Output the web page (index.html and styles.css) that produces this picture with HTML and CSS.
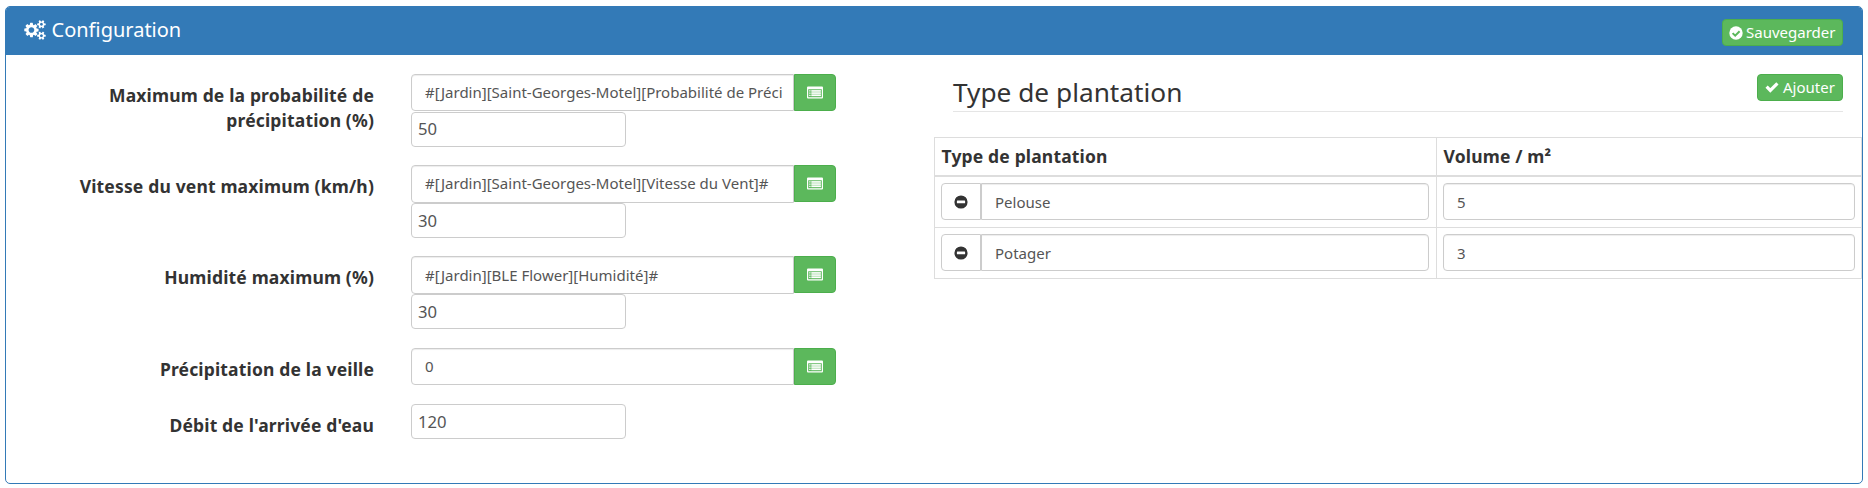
FILE: index.html
```html
<!DOCTYPE html>
<html lang="fr">
<head>
<meta charset="utf-8">
<title>Configuration</title>
<link rel="stylesheet" href="styles.css">
</head>
<body>
<svg class="defs" width="0" height="0" aria-hidden="true">
  <symbol id="cogs" viewBox="0 0 1920 1792"><path d="M896 896q0-106-75-181t-181-75-181 75-75 181 75 181 181 75 181-75 75-181zm768 512q0-52-38-90t-90-38-90 38-38 90q0 53 37.500 90.500t90.500 37.500 90.500-37.500 37.500-90.500zm0-1024q0-52-38-90t-90-38-90 38-38 90q0 53 37.500 90.500t90.500 37.500 90.500-37.500 37.500-90.500zm-384 421v185q0 10-7 19.500t-16 10.500l-155 24q-11 35-32 76 34 48 90 115 7 11 7 20 0 12-7 19-23 30-82.500 89.500t-78.500 59.500q-11 0-21-7l-115-90q-37 19-77 31-11 108-23 155-7 24-30 24h-186q-11 0-20-7.500t-10-17.500l-23-153q-34-10-75-31l-118 89q-7 7-20 7-11 0-21-8-144-133-144-160 0-9 7-19 10-14 41-53t47-61q-23-44-35-82l-152-24q-10-1-17-9.500t-7-19.500v-185q0-10 7-19.500t16-10.500l155-24q11-35 32-76-34-48-90-115-7-11-7-20 0-12 7-20 22-30 82-89t79-59q11 0 21 7l115 90q34-18 77-32 11-108 23-154 7-24 30-24h186q11 0 20 7.500t10 17.500l23 153q34 10 75 31l118-89q8-7 20-7 11 0 21 8 144 133 144 160 0 8-7 19-12 16-42 54t-45 60q23 48 34 82l152 23q10 2 17 10.500t7 19.500zm640 533v140q0 16-149 31-12 27-30 52 51 113 51 138 0 4-4 7-122 71-124 71-8 0-46-47t-52-68q-20 2-30 2t-30-2q-14 21-52 68t-46 47q-2 0-124-71-4-3-4-7 0-25 51-138-18-25-30-52-149-15-149-31v-140q0-16 149-31 13-29 30-52-51-113-51-138 0-4 4-7 4-2 35-20t59-34 30-16q8 0 46 46.500t52 67.500q20-2 30-2t30 2q51-71 92-112l6-2q4 0 124 70 4 3 4 7 0 25-51 138 17 23 30 52 149 15 149 31zm0-1024v140q0 16-149 31-12 27-30 52 51 113 51 138 0 4-4 7-122 71-124 71-8 0-46-47t-52-68q-20 2-30 2t-30-2q-14 21-52 68t-46 47q-2 0-124-71-4-3-4-7 0-25 51-138-18-25-30-52-149-15-149-31v-140q0-16 149-31 13-29 30-52-51-113-51-138 0-4 4-7 4-2 35-20t59-34 30-16q8 0 46 46.500t52 67.500q20-2 30-2t30 2q51-71 92-112l6-2q4 0 124 70 4 3 4 7 0 25-51 138 17 23 30 52 149 15 149 31z"/></symbol>
  <symbol id="check-circle" viewBox="0 0 14 14"><circle cx="7" cy="7" r="6.700"/><path class="cut" d="M3.600 7.100l2.600 2.600 4.400-4.400"/></symbol>
  <symbol id="check" viewBox="0 0 14 12"><path class="line" d="M1.600 5.700l3.700 3.700 7.100-7.100"/></symbol>
  <symbol id="list-alt" viewBox="0 0 16 13"><path fill-rule="evenodd" d="M1 .5h14a1 1 0 0 1 1 1v10a1 1 0 0 1-1 1H1a1 1 0 0 1-1-1v-10a1 1 0 0 1 1-1zM1.200 3.200v8.100h13.600V3.200z"/><path d="M2.200 4.200h1.400v1.200H2.200zM2.200 6.500h1.400v1.200H2.200zM2.200 8.800h1.400V10H2.200zM4.400 4.200h9.400v1.300H4.400zM4.400 6.500h9.400v1.300H4.400zM4.400 8.800h9.400v1.300H4.400z"/><path opacity=".55" d="M4.400 4h9.400v6.300H4.400z"/></symbol>
  <symbol id="minus-circle" viewBox="0 0 14 14"><path fill-rule="evenodd" d="M7 .4a6.600 6.600 0 1 0 0 13.200A6.600 6.600 0 0 0 7 .4zM3.400 5.600h7.200a.5.5 0 0 1 .5.5v1.600a.5.5 0 0 1-.5.5H3.400a.5.5 0 0 1-.5-.5V6.100a.5.5 0 0 1 .5-.5z"/></symbol>
</svg>
<section class="panel">
  <header class="panel-heading">
    <h3 class="panel-title"><svg class="icon-cogs"><use href="#cogs"/></svg>Configuration</h3>
    <button class="btn btn-save"><svg class="icon-save"><use href="#check-circle"/></svg>Sauvegarder</button>
  </header>
  <div class="panel-body">
    <form class="settings">
      <div class="form-row">
        <label class="label">Maximum de la probabilité de précipitation (%)</label>
        <div class="fields">
          <div class="group"><input class="control" value="#[Jardin][Saint-Georges-Motel][Probabilité de Précipitation]#"><button type="button" class="pick"><svg class="icon-list"><use href="#list-alt"/></svg></button></div>
          <input class="number" value="50">
        </div>
      </div>
      <div class="form-row">
        <label class="label">Vitesse du vent maximum (km/h)</label>
        <div class="fields">
          <div class="group"><input class="control" value="#[Jardin][Saint-Georges-Motel][Vitesse du Vent]#"><button type="button" class="pick"><svg class="icon-list"><use href="#list-alt"/></svg></button></div>
          <input class="number" value="30">
        </div>
      </div>
      <div class="form-row">
        <label class="label">Humidité maximum (%)</label>
        <div class="fields">
          <div class="group"><input class="control" value="#[Jardin][BLE Flower][Humidité]#"><button type="button" class="pick"><svg class="icon-list"><use href="#list-alt"/></svg></button></div>
          <input class="number" value="30">
        </div>
      </div>
      <div class="form-row">
        <label class="label">Précipitation de la veille</label>
        <div class="fields">
          <div class="group"><input class="control" value="0"><button type="button" class="pick"><svg class="icon-list"><use href="#list-alt"/></svg></button></div>
        </div>
      </div>
      <div class="form-row">
        <label class="label">Débit de l'arrivée d'eau</label>
        <div class="fields"><input class="number" value="120"></div>
      </div>
    </form>
    <div class="plants">
      <div class="legend">
        <h4 class="legend-title">Type de plantation</h4>
        <button class="btn btn-add"><svg class="icon-add"><use href="#check"/></svg>Ajouter</button>
      </div>
      <div class="table">
        <div class="row row-head"><div class="cell">Type de plantation</div><div class="cell">Volume / m²</div></div>
        <div class="row">
          <div class="cell"><div class="group"><button class="remove"><svg class="icon-minus"><use href="#minus-circle"/></svg></button><input class="control control-end" value="Pelouse"></div></div>
          <div class="cell"><input class="control control-full" value="5"></div>
        </div>
        <div class="row">
          <div class="cell"><div class="group"><button class="remove"><svg class="icon-minus"><use href="#minus-circle"/></svg></button><input class="control control-end" value="Potager"></div></div>
          <div class="cell"><input class="control control-full" value="3"></div>
        </div>
      </div>
    </div>
  </div>
</section>
</body>
</html>
```
FILE: styles.css
```css
* { box-sizing: border-box; }
body {
  margin: 0;
  padding: 6px 5px 4px;
  height: 488px;
  overflow: hidden;
  background: #fff;
  color: #333;
  font: 17.5px/25px "Noto Sans", sans-serif;
}
input, button { font-family: inherit; margin: 0; }
svg { flex: none; fill: currentColor; }
.defs { position: absolute; }
.panel {
  height: 478px;
  border: 1px solid #337ab7;
  border-radius: 5px;
  overflow: hidden;
}
.panel-heading {
  display: flex;
  justify-content: space-between;
  align-items: flex-start;
  height: 48px;
  padding: 12px 19px 0 18px;
  background: #337ab7;
  color: #fff;
}
.panel-title {
  display: flex;
  gap: 5.5px;
  margin: 0;
  font-size: 20px;
  line-height: 22px;
  font-weight: 400;
}
.icon-cogs { width: 22px; height: 20px; margin-top: 1px; }
.btn {
  display: flex;
  align-items: center;
  height: 27px;
  padding: 0 6px 1px;
  border: 1px solid #4cae4c;
  border-radius: 4px;
  background: #5cb85c;
  color: #fff;
  font-size: 15px;
  white-space: nowrap;
}
.btn-save { width: 121px; gap: 3px; }
.btn-add { width: 86px; gap: 4px; padding-left: 7px; }
.icon-save { width: 14px; height: 14px; margin-top: 1px; }
.icon-add { width: 14px; height: 12px; }
.cut { fill: none; stroke: #5cb85c; stroke-width: 2; }
.line { fill: none; stroke: currentColor; stroke-width: 3.2; }
.panel-body { display: flex; justify-content: space-between; padding-top: 19px; }
.settings { width: 830px; }
.form-row { display: flex; gap: 37px; margin-bottom: 18.45px; }
.form-row:last-child { padding-top: .8px; }
.label {
  width: 368px;
  padding: 9px 0 0 60px;
  height: 37px;
  text-align: right;
  font-weight: 700;
  letter-spacing: .16px;
}
.fields { width: 425px; }
.group { display: flex; height: 37.4px; }
.control {
  flex: 1;
  min-width: 0;
  height: 37.4px;
  padding: 0 11px 1px 13px;
  border: 1px solid #ccc;
  border-radius: 4px 0 0 4px;
  box-shadow: inset 0 1px 1px rgba(0, 0, 0, .075);
  background: #fff;
  color: #555;
  font-size: 15px;
}
.control-end { border-radius: 0 4px 4px 0; }
.control-full { width: 100%; border-radius: 4px; }
.cell .control { padding-bottom: 0; }
.pick {
  display: flex;
  align-items: center;
  justify-content: center;
  width: 42px;
  height: 37px;
  padding: 0;
  border: 1px solid #4cae4c;
  border-radius: 0 4px 4px 0;
  background: #5cb85c;
  color: #fff;
}
.icon-list { width: 16px; height: 13px; }
.number {
  display: block;
  width: 215px;
  height: 35px;
  padding: 0 6px 1px;
  border: 1px solid #ccc;
  border-radius: 4px;
  background: #fff;
  color: #555;
  font-size: 16.67px;
}
.group + .number { margin-top: .4px; }
.plants { width: 928px; }
.legend {
  display: flex;
  justify-content: space-between;
  align-items: flex-start;
  height: 38px;
  margin: 0 19px 25px;
  border-bottom: 1px solid #e5e5e5;
}
.legend-title { margin: 0; font-size: 26.25px; line-height: 36px; font-weight: 400; }
.table { border: 1px solid #ddd; border-bottom: 0; }
.row {
  display: grid;
  grid-template-columns: 502px 1fr;
  height: 51px;
  border-bottom: 1px solid #ddd;
}
.row-head { height: 39px; border-bottom-width: 2px; font-weight: 700; letter-spacing: .16px; }
.cell { padding: 6px; }
.row-head .cell { padding-left: 6.5px; }
.cell:first-child { border-right: 1px solid #ddd; }
.row:not(.row-head) .cell:first-child { padding-right: 7px; }
.remove {
  display: flex;
  align-items: center;
  justify-content: center;
  width: 40px;
  height: 37px;
  padding: 0;
  border: 1px solid #ccc;
  border-radius: 4px 0 0 4px;
  background: #fff;
  color: #333;
}
.icon-minus { width: 14px; height: 14px; }
```
